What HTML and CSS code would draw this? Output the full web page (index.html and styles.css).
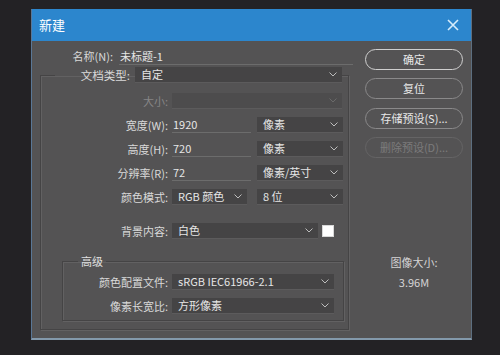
FILE: index.html
```html
<!DOCTYPE html>
<html lang="zh-CN">
<head>
<meta charset="UTF-8">
<title>新建</title>
<link rel="stylesheet" href="styles.css">
</head>
<body>
<div class="dialog">
  <div class="titlebar">
    <span class="title">新建</span>
    <svg class="close" width="12" height="12" viewBox="0 0 12 12"><path d="M1 1L11 11M11 1L1 11" stroke="#d6ecfb" stroke-width="1.6" fill="none"/></svg>
  </div>
  <div class="body">
    <div class="main">
      <div class="name-row">
        <span class="name-label">名称(N):</span>
        <span class="name-input">未标题-1</span>
      </div>
      <fieldset class="frame">
        <legend class="preset">
          <span class="preset-label">文档类型:</span>
          <span class="select preset-select">自定<svg class="chev" width="8" height="5" viewBox="0 0 8 5"><path d="M0.5 0.5L4 4L7.5 0.5" stroke="#bdbdbd" fill="none"/></svg></span>
        </legend>
        <div class="row">
          <span class="lbl dim">大小:</span>
          <span class="select disabled w-size"><svg class="chev" width="8" height="5" viewBox="0 0 8 5"><path d="M0.5 0.5L4 4L7.5 0.5" stroke="#6a6a6a" fill="none"/></svg></span>
        </div>
        <div class="row">
          <span class="lbl">宽度(W):</span>
          <span class="field">1920</span>
          <span class="select unit">像素<svg class="chev" width="8" height="5" viewBox="0 0 8 5"><path d="M0.5 0.5L4 4L7.5 0.5" stroke="#bdbdbd" fill="none"/></svg></span>
        </div>
        <div class="row">
          <span class="lbl">高度(H):</span>
          <span class="field">720</span>
          <span class="select unit">像素<svg class="chev" width="8" height="5" viewBox="0 0 8 5"><path d="M0.5 0.5L4 4L7.5 0.5" stroke="#bdbdbd" fill="none"/></svg></span>
        </div>
        <div class="row">
          <span class="lbl">分辨率(R):</span>
          <span class="field">72</span>
          <span class="select unit">像素/英寸<svg class="chev" width="8" height="5" viewBox="0 0 8 5"><path d="M0.5 0.5L4 4L7.5 0.5" stroke="#bdbdbd" fill="none"/></svg></span>
        </div>
        <div class="row">
          <span class="lbl">颜色模式:</span>
          <span class="select w-mode">RGB 颜色<svg class="chev" width="8" height="5" viewBox="0 0 8 5"><path d="M0.5 0.5L4 4L7.5 0.5" stroke="#bdbdbd" fill="none"/></svg></span>
          <span class="select unit bits">8 位<svg class="chev" width="8" height="5" viewBox="0 0 8 5"><path d="M0.5 0.5L4 4L7.5 0.5" stroke="#bdbdbd" fill="none"/></svg></span>
        </div>
        <div class="row row-bg">
          <span class="lbl">背景内容:</span>
          <span class="select w-bg">白色<svg class="chev" width="8" height="5" viewBox="0 0 8 5"><path d="M0.5 0.5L4 4L7.5 0.5" stroke="#bdbdbd" fill="none"/></svg></span>
          <span class="swatch"></span>
        </div>
        <fieldset class="advanced">
          <legend class="adv-legend">高级</legend>
          <div class="row">
            <span class="lbl lbl-adv">颜色配置文件:</span>
            <span class="select w-adv">sRGB IEC61966-2.1<svg class="chev" width="8" height="5" viewBox="0 0 8 5"><path d="M0.5 0.5L4 4L7.5 0.5" stroke="#bdbdbd" fill="none"/></svg></span>
          </div>
          <div class="row">
            <span class="lbl lbl-adv">像素长宽比:</span>
            <span class="select w-adv">方形像素<svg class="chev" width="8" height="5" viewBox="0 0 8 5"><path d="M0.5 0.5L4 4L7.5 0.5" stroke="#bdbdbd" fill="none"/></svg></span>
          </div>
        </fieldset>
      </fieldset>
    </div>
    <div class="side">
      <button class="btn btn-ok">确定</button>
      <button class="btn">复位</button>
      <button class="btn">存储预设(S)...</button>
      <button class="btn btn-off">删除预设(D)...</button>
      <div class="size-info">
        <div>图像大小:</div>
        <div class="size-value">3.96M</div>
      </div>
    </div>
  </div>
</div>
</body>
</html>
```

FILE: styles.css
```css
body {
    margin: 0;
    background-color: #232225;
    font-family: "Noto Sans CJK SC", "Noto Sans", sans-serif;
    font-size: 11px;
    color: #d9d9d9;
    width: 500px;
    height: 355px;
    overflow: hidden;
}
.dialog {
    margin: 9px 0 0 31px;
    width: 441px;
    box-sizing: border-box;
    background-color: #545354;
    border-left: 1px solid #5a7796;
    border-right: 1px solid #5d6f80;
    border-bottom: 2px solid #8399ab;
}
.titlebar {
    height: 32px;
    background-color: #2c86cd;
    display: flex;
    align-items: center;
    justify-content: space-between;
    padding: 0 12px 0 7px;
}
.title {
    color: #fff;
    font-size: 13px;
    line-height: 16px;
}
.body {
    display: flex;
    padding: 8px 0 8px 0;
}
.main {
    width: 324px;
}
.side {
    width: 115px;
    box-sizing: border-box;
    padding: 0 8px 0 9px;
    display: flex;
    flex-direction: column;
    gap: 8.3px;
}
.name-row {
    display: flex;
    height: 16px;
    line-height: 15px;
}
.name-label {
    width: 81px;
    text-align: right;
}
.name-input {
    margin-left: 6px;
    width: 233px;
    border-bottom: 1px solid #6c6c6c;
    color: #e6e6e6;
    padding-left: 1px;
}
fieldset {
    margin: 0;
    padding: 0;
    min-width: 0;
    box-sizing: border-box;
    border: 1px solid #454445;
    box-shadow: 1px 1px 0 #626162, inset 1px 1px 0 #626162;
}
.frame {
    margin: 2px 0 0 8px;
    width: 309px;
    padding: 10px 0 0 0;
}
.preset {
    margin-left: 14px;
    padding: 0 0 0 24px;
    display: flex;
    align-items: center;
}
.preset-label {
    width: 51px;
    text-align: right;
    font-size: 11.5px;
}
.preset-select {
    margin-left: 5px;
    width: 207px;
    height: 17px;
}
.row {
    display: flex;
    align-items: center;
    height: 16px;
}
.row + .row {
    margin-top: 8px;
}
.row.row-bg {
    margin-top: 18px;
}
.lbl {
    width: 127px;
    text-align: right;
    margin-right: 4px;
    line-height: 16px;
}
.lbl-adv {
    width: 105px;
}
.dim {
    color: #868586;
}
.select {
    box-sizing: border-box;
    height: 16px;
    background-color: #454445;
    border-bottom: 1px solid #5c5b5c;
    color: #e6e6e6;
    line-height: 15px;
    padding: 0 5px 0 6px;
    display: flex;
    align-items: center;
    justify-content: space-between;
}
.chev {
    flex: none;
}
.disabled {
    background-color: #4d4c4d;
    justify-content: flex-end;
}
.w-size {
    width: 170px;
}
.field {
    box-sizing: border-box;
    width: 79px;
    height: 16px;
    line-height: 15px;
    padding-left: 1px;
    color: #e6e6e6;
    border-bottom: 1px solid #6c6c6c;
}
.unit {
    margin-left: 6px;
    width: 86px;
}
.w-mode {
    width: 75px;
}
.bits {
    margin-left: 10px;
}
.w-bg {
    width: 146px;
}
.swatch {
    margin-left: 4px;
    width: 12px;
    height: 12px;
    background-color: #fff;
    box-sizing: border-box;
    border: 1px solid #d8d8d8;
}
.advanced {
    margin: 15px 0 8px 21px;
    width: 282px;
    padding: 5px 0 6px 0;
}
.adv-legend {
    margin-left: 15px;
    padding: 0 3px;
    line-height: 15px;
    color: #e0e0e0;
}
.w-adv {
    width: 162px;
}
.btn {
    height: 21px;
    width: 98px;
    border-radius: 11px;
    background: transparent;
    border: 1px solid #8a898a;
    color: #e8e8e8;
    font-family: "Noto Sans CJK SC", "Noto Sans", sans-serif;
    font-size: 11px;
    padding: 0;
    line-height: 19px;
}
.btn-ok {
    border: 1.5px solid #cfcfcf;
}
.btn-off {
    border-color: #656465;
    color: #7c7b7c;
}
.size-info {
    margin-top: 88px;
    text-align: center;
    line-height: 16px;
    color: #d4d4d4;
}
.size-value {
    margin-top: 4px;
}
```
